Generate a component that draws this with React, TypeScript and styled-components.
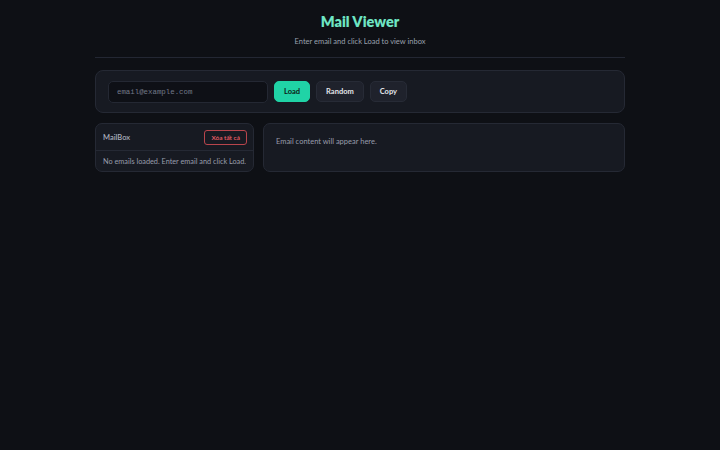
import styled, { createGlobalStyle } from "styled-components";

const GlobalStyle = createGlobalStyle`
  html, body {
    margin: 0;
    padding: 0;
    background: #0e1015;
    font-family: Lato, "Noto Sans", sans-serif;
  }
  * { box-sizing: border-box; }
`;

const App = () => {
  return (
    <>
      <GlobalStyle />
      <Page>
        <Header>
          <Title>Mail Viewer</Title>
          <Subtitle>Enter email and click Load to view inbox</Subtitle>
        </Header>
        <Controls>
          <EmailInput placeholder="email@example.com" />
          <Button $variant="primary">Load</Button>
          <Button>Random</Button>
          <Button>Copy</Button>
        </Controls>
        <Main>
          <Inbox>
            <InboxHeader>
              <InboxTitle>MailBox</InboxTitle>
              <DangerButton>Xóa tất cả</DangerButton>
            </InboxHeader>
            <EmptyText>No emails loaded. Enter email and click Load.</EmptyText>
          </Inbox>
          <Viewer>
            <ViewerText>Email content will appear here.</ViewerText>
          </Viewer>
        </Main>
      </Page>
    </>
  );
};

export default App;

const Page = styled.div`
  width: 530px;
  margin: 0 auto;
  padding-top: 13px;
  display: flex;
  flex-direction: column;
`;

const Header = styled.header`
  display: flex;
  flex-direction: column;
  align-items: center;
  padding-bottom: 10px;
  border-bottom: 1px solid #232733;
`;

const Title = styled.h1`
  margin: 0;
  color: #6ee6c4;
  font-size: 14.5px;
  font-weight: 800;
  line-height: 18px;
`;

const Subtitle = styled.p`
  margin: 6px 0 0;
  color: #9aa0ad;
  font-size: 7.5px;
  line-height: 10px;
`;

const Controls = styled.div`
  margin-top: 12px;
  display: flex;
  align-items: center;
  gap: 6px;
  padding: 10px 12px;
  height: 43px;
  background: #171a22;
  border: 1px solid #252934;
  border-radius: 8px;
`;

const EmailInput = styled.input`
  width: 160px;
  height: 22px;
  padding: 0 8px;
  background: #0e1016;
  border: 1px solid #242833;
  border-radius: 5px;
  color: #c8ccd6;
  font-family: "Liberation Mono", "DejaVu Sans Mono", monospace;
  font-size: 7.4px;
  outline: none;

  &::placeholder {
    color: #727888;
  }
`;

const Button = styled.button<{ $variant?: "primary" }>`
  height: 21px;
  padding: 0 9px;
  border-radius: 5px;
  border: 1px solid ${({ $variant }) => ($variant === "primary" ? "#20d3a6" : "#272b36")};
  background: ${({ $variant }) => ($variant === "primary" ? "#20d3a6" : "#1f222c")};
  color: ${({ $variant }) => ($variant === "primary" ? "#0c1a16" : "#e4e6eb")};
  font-family: inherit;
  font-size: 7.5px;
  font-weight: 700;
  cursor: pointer;
`;

const Main = styled.div`
  margin-top: 10px;
  display: grid;
  grid-template-columns: 159px 1fr;
  gap: 9px;
  align-items: start;
`;

const Panel = styled.section`
  background: #171a22;
  border: 1px solid #252934;
  border-radius: 7px;
  height: 49px;
`;

const Inbox = styled(Panel)`
  display: flex;
  flex-direction: column;
`;

const InboxHeader = styled.div`
  display: flex;
  align-items: center;
  justify-content: space-between;
  height: 27px;
  padding: 0 6px 0 7px;
  border-bottom: 1px solid #252934;
`;

const InboxTitle = styled.span`
  color: #a9aebb;
  font-size: 7.5px;
  font-weight: 600;
`;

const DangerButton = styled.button`
  height: 15px;
  padding: 0 6px;
  background: transparent;
  border: 1px solid #b8454c;
  border-radius: 3px;
  color: #ee5f66;
  font-family: inherit;
  font-size: 6.5px;
  font-weight: 600;
`;

const EmptyText = styled.p`
  margin: 0;
  flex: 1;
  display: flex;
  align-items: center;
  justify-content: center;
  color: #979dab;
  font-size: 7.3px;
`;

const Viewer = styled(Panel)`
  padding: 13px 12px;
`;

const ViewerText = styled.p`
  margin: 0;
  color: #979dab;
  font-size: 7.5px;
`;
